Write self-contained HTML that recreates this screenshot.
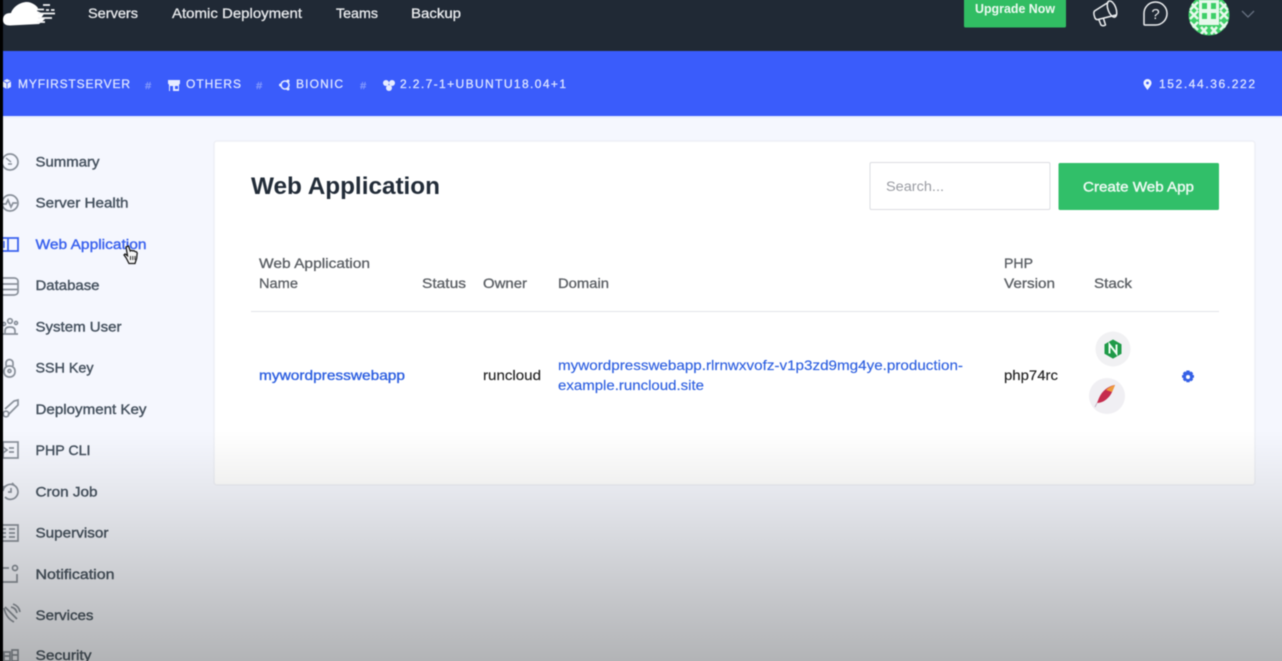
<!DOCTYPE html>
<html lang="en">
<head>
<meta charset="utf-8">
<title>Web Application</title>
<style>
html,body{margin:0;padding:0;width:1282px;height:661px;overflow:hidden;background:#f5f7fe}
#wrap{position:relative;width:1282px;height:661px;overflow:hidden}
svg{display:block;position:absolute;left:-10px;top:-10px;filter:blur(.5px)}
text{font-family:"Liberation Sans",sans-serif;font-size:14px}
.nav text{fill:#e8eaed;stroke:#e8eaed;stroke-width:.3px}
.bar text{fill:#dfe6ff;stroke:#dfe6ff;stroke-width:.25px;font-size:12px}
.side text{fill:#46525f;stroke:#46525f;stroke-width:.4px}
.th text{fill:#5a5e63;stroke:#5a5e63;stroke-width:.3px}
.ic{fill:none;stroke:#8a919b;stroke-width:1.700}
</style>
</head>
<body>
<div id="wrap">
<svg width="1302" height="681" viewBox="-10 -10 1302 681" xmlns="http://www.w3.org/2000/svg">
<defs>
<linearGradient id="fade" x1="0" y1="0" x2="0" y2="1">
<stop offset="0" stop-color="#1c1c14" stop-opacity="0"/>
<stop offset=".06" stop-color="#1c1c14" stop-opacity=".015"/>
<stop offset=".25" stop-color="#1c1c14" stop-opacity=".07"/>
<stop offset="1" stop-color="#1c1c14" stop-opacity=".32"/>
</linearGradient>
</defs>
<rect x="-10" y="-10" width="1302" height="681" fill="#f5f7fe"/>

<!-- top bar -->
<rect x="3" y="-10" width="1289" height="61" fill="#202935"/>
<rect x="3" y="51" width="1289" height="65" fill="#3a5cfb"/>
<rect x="3" y="116" width="1289" height="2" fill="#e9effe"/>

<!-- logo -->
<path d="M3 20C3 15 6 13 11 13C13 7 20 2 27 2C31 2 36 5 38 8L37 11L44 14L41 18L45 19L39 24L10 25.500C6 25.500 3 24 3 20Z" fill="#fff"/>
<path d="M43 5h7M37 9.500h7M46 10h3M51 10h3.500M38 13.500h17M38 18h14M37 22h8" stroke="#f2f3f5" stroke-width="1.700" fill="none"/>

<g class="nav">
<text x="88" y="18" textLength="50" lengthAdjust="spacingAndGlyphs">Servers</text>
<text x="172" y="18" textLength="130" lengthAdjust="spacingAndGlyphs">Atomic Deployment</text>
<text x="336" y="18" textLength="42" lengthAdjust="spacingAndGlyphs">Teams</text>
<text x="411" y="18" textLength="50" lengthAdjust="spacingAndGlyphs">Backup</text>
</g>

<!-- upgrade -->
<path d="M964 -10H1066V26a1.500 1.500 0 0 1-1.500 1.500H965.500A1.500 1.500 0 0 1 964 26Z" fill="#31bd63"/>
<text x="975" y="13" textLength="80" lengthAdjust="spacingAndGlyphs" style="font-size:12.500px;font-weight:bold" fill="#eefaf2">Upgrade Now</text>

<!-- megaphone -->
<g fill="none" stroke="#eceef0" stroke-width="1.500" stroke-linejoin="round" stroke-linecap="round">
<ellipse cx="1112" cy="9" rx="4" ry="8.500" transform="rotate(-20 1112 9)"/>
<path d="M1108 2.500L1094.500 11Q1093 13 1095 18Q1096 20 1098 19.500L1116 15"/>
<path d="M1099 20L1101 25Q1103 26.500 1105.500 25L1103.500 18.500"/>
</g>
<!-- question -->
<path d="M1144 24V13.500A11.500 11.500 0 1 1 1155.500 25H1145Q1144 25 1144 24Z" fill="none" stroke="#eceef0" stroke-width="1.500"/>
<text x="1155.500" y="19" text-anchor="middle" style="font-size:15px" fill="#eceef0">?</text>

<!-- avatar -->
<clipPath id="av"><circle cx="1209" cy="15" r="20.500"/></clipPath>
<g clip-path="url(#av)">
<rect x="1188" y="-6" width="42" height="42" fill="#3ecf68"/>
<path d="M1190 2l8 8M1198 2l-8 8M1190 11l8 8M1198 11l-8 8M1220 2l8 8M1228 2l-8 8M1220 11l8 8M1228 11l-8 8M1190 22l8 8M1198 22l-8 8M1220 22l8 8M1228 22l-8 8M1201 27l6 7M1207 27l-6 7M1211 27l6 7M1217 27l-6 7" stroke="#e7f9ec" stroke-width="2.500"/>
<rect x="1199" y="0" width="20" height="25" fill="#e7f9ec"/>
<path d="M1202 3h5v6h-5zM1211 3h5v6h-5zM1202 13h5v6h-5zM1211 13h5v6h-5z" fill="#3ecf68"/>
</g>
<path d="M1242 11l6 6 6-6" fill="none" stroke="#667080" stroke-width="1.300"/>

<!-- breadcrumbs -->
<g class="bar">
<path d="M3 81l4-2 4 2v6l-4 2-4-2z" fill="#e6ebff"/><path d="M3 81l4 2 4-2M7 83v6" stroke="#3a5cfb" stroke-width=".8" fill="none"/>
<text x="18" y="88" textLength="112" lengthAdjust="spacing">MYFIRSTSERVER</text>
<text x="145" y="89" textLength="6" lengthAdjust="spacingAndGlyphs" style="font-size:10px;font-style:italic;opacity:.45">#</text>
<path d="M168 80h12v3a1.500 1.500 0 0 1-1 1.500V91h-10v-6.500a1.500 1.500 0 0 1-1-1.500z" fill="#e6ebff"/><path d="M170 86h3v5h-3zM175 86h3v3h-3z" fill="#3a5cfb"/>
<text x="186" y="88" textLength="55" lengthAdjust="spacing">OTHERS</text>
<text x="256" y="89" textLength="6" lengthAdjust="spacingAndGlyphs" style="font-size:10px;font-style:italic;opacity:.45">#</text>
<circle cx="285" cy="85" r="4" fill="none" stroke="#e6ebff" stroke-width="1.500"/><circle cx="280.500" cy="85" r="1.500" fill="#e6ebff"/><circle cx="288" cy="81" r="1.500" fill="#e6ebff"/><circle cx="288" cy="89" r="1.500" fill="#e6ebff"/>
<text x="296" y="88" textLength="47" lengthAdjust="spacing">BIONIC</text>
<text x="360" y="89" textLength="6" lengthAdjust="spacingAndGlyphs" style="font-size:10px;font-style:italic;opacity:.45">#</text>
<circle cx="386" cy="83" r="3" fill="#e6ebff"/><circle cx="392" cy="83" r="3" fill="#e6ebff"/><circle cx="389" cy="88" r="3" fill="#e6ebff"/>
<text x="400" y="88" textLength="166" lengthAdjust="spacing">2.2.7-1+UBUNTU18.04+1</text>
<path d="M1147.500 90C1145 86.500 1143.500 85 1143.500 83a4 4 0 0 1 8 0C1151.500 85 1150 86.500 1147.500 90Z" fill="#f0f3ff"/><circle cx="1147.500" cy="83" r="1.400" fill="#3a5cfb"/>
<text x="1159" y="88" textLength="96" lengthAdjust="spacing">152.44.36.222</text>
</g>

<!-- sidebar icons -->
<g class="ic">
<circle cx="10" cy="162" r="8"/><path d="M6 158l5 4M8 164h4" stroke-width="1.400"/>
<circle cx="10" cy="203" r="8"/><path d="M3 204h3l2-4 3 7 2-4h4"/>
<path d="M3 238H18V251H3M8 238V251" stroke="#3a62ee" stroke-width="1.800"/><path d="M4 241V248" stroke="#3a62ee" stroke-width="1.300"/>
<path d="M3 278h11a4 3 0 0 1 4 3v11a4 3 0 0 1-4 3H3M3 284h15M3 289.500h15"/>
<circle cx="10" cy="321" r="2.300"/><circle cx="4" cy="324" r="1.500"/><circle cx="16" cy="323" r="1.500"/><path d="M5 334v-3q0-4 5-4t5 4v3zM3 334h15"/>
<rect x="4" y="366" width="11" height="11" rx="5"/><path d="M6 366v-3a3.500 3.500 0 0 1 7 0v3"/><circle cx="9.500" cy="371" r="1.500"/>
<path d="M5 409L14 401L18 400L18 405L8 415"/><circle cx="6" cy="414" r="2.800"/>
<rect x="3" y="442" width="15" height="16"/><path d="M3 447l4 3-4 3M9 448h5M9 452h5"/>
<path d="M3 491a7.500 7.500 0 1 1 2 6M6 486l-3 1M11 488v4H8M12 483l2 2" />
<path d="M3 525H18V541H3M3 529h3M3 533h3M3 537h3M9 529h6M9 533h6M9 537h6"/>
<path d="M3 568H9M3 582H17V574"/><circle cx="15" cy="568" r="2.500"/>
<path d="M4 608Q6 618 14 622M5 607l12 12M11 607q5 1 6 6M13 604q6 2 7 8"/>
<path d="M4 652h6v9H4zM12 650h6v11h-6zM12 655h6M4 656h6"/>
</g>

<!-- sidebar labels -->
<g class="side">
<text x="35.500" y="166.500" textLength="64" lengthAdjust="spacingAndGlyphs">Summary</text>
<text x="35.500" y="207.500" textLength="93" lengthAdjust="spacingAndGlyphs">Server Health</text>
<text x="35.500" y="249" textLength="111" lengthAdjust="spacingAndGlyphs" style="fill:#3a62ee;stroke:#3a62ee">Web Application</text>
<text x="35.500" y="290" textLength="64" lengthAdjust="spacingAndGlyphs">Database</text>
<text x="35.500" y="331.500" textLength="86" lengthAdjust="spacingAndGlyphs">System User</text>
<text x="35.500" y="372.500" textLength="58" lengthAdjust="spacingAndGlyphs">SSH Key</text>
<text x="35.500" y="414" textLength="111" lengthAdjust="spacingAndGlyphs">Deployment Key</text>
<text x="35.500" y="455" textLength="55" lengthAdjust="spacingAndGlyphs">PHP CLI</text>
<text x="35.500" y="496.500" textLength="62" lengthAdjust="spacingAndGlyphs">Cron Job</text>
<text x="35.500" y="537.500" textLength="73" lengthAdjust="spacingAndGlyphs">Supervisor</text>
<text x="35.500" y="579" textLength="79" lengthAdjust="spacingAndGlyphs">Notification</text>
<text x="35.500" y="620" textLength="58" lengthAdjust="spacingAndGlyphs">Services</text>
<text x="35.500" y="660" textLength="56" lengthAdjust="spacingAndGlyphs">Security</text>
</g>

<!-- cursor -->
<path d="M126 247l2.500-1 1.800 5 1.200-.7 1.300.6 1.200-.2 1.200.9 1.300.2.700 1.200-.6 5.500-1.600 5h-6l-2.800-5.500-2.200-3 1.100-1 2.400 1.700z" fill="#f4f4f4" stroke="#1a1a1a" stroke-width="1.300"/>
<path d="M130.500 256v4M132.800 256v4M135 256v4" stroke="#1a1a1a" stroke-width=".9"/>

<!-- card -->
<rect x="214" y="141" width="1041" height="344" rx="3" fill="#fff" stroke="#eef0f6" stroke-width="1.500"/>
<text x="251" y="194" textLength="189" lengthAdjust="spacingAndGlyphs" style="font-size:24px;font-weight:bold" fill="#222c38">Web Application</text>

<rect x="870" y="162.500" width="180" height="47" rx="1.500" fill="#fff" stroke="#dcdde2" stroke-width="1"/>
<text x="886" y="191" textLength="58" lengthAdjust="spacingAndGlyphs" fill="#9a9ca3">Search...</text>
<rect x="1058.500" y="163" width="160.500" height="47" rx="1.500" fill="#31bf69"/>
<text x="1083" y="191.500" textLength="111" lengthAdjust="spacingAndGlyphs" fill="#eefaf3" stroke="#eefaf3" stroke-width=".4">Create Web App</text>

<g class="th">
<text x="259" y="268" textLength="111" lengthAdjust="spacingAndGlyphs">Web Application</text>
<text x="259" y="288" textLength="39" lengthAdjust="spacingAndGlyphs">Name</text>
<text x="422" y="288" textLength="44" lengthAdjust="spacingAndGlyphs">Status</text>
<text x="483" y="288" textLength="44" lengthAdjust="spacingAndGlyphs">Owner</text>
<text x="558" y="288" textLength="51" lengthAdjust="spacingAndGlyphs">Domain</text>
<text x="1004" y="268" textLength="29" lengthAdjust="spacingAndGlyphs">PHP</text>
<text x="1004" y="288" textLength="51" lengthAdjust="spacingAndGlyphs">Version</text>
<text x="1094" y="288" textLength="38" lengthAdjust="spacingAndGlyphs">Stack</text>
</g>
<rect x="251" y="311" width="968" height="1" fill="#e2e4e8"/>

<text x="259" y="380" textLength="146" lengthAdjust="spacingAndGlyphs" fill="#2d5fe0" stroke="#2d5fe0" stroke-width=".35">mywordpresswebapp</text>
<text x="483" y="380" textLength="58" lengthAdjust="spacingAndGlyphs" fill="#222" stroke="#222" stroke-width=".15">runcloud</text>
<text x="558" y="370" textLength="405" lengthAdjust="spacingAndGlyphs" fill="#2d5fe0" stroke="#2d5fe0" stroke-width=".15">mywordpresswebapp.rlrnwxvofz-v1p3zd9mg4ye.production-</text>
<text x="558" y="390" textLength="146" lengthAdjust="spacingAndGlyphs" fill="#2d5fe0" stroke="#2d5fe0" stroke-width=".15">example.runcloud.site</text>
<text x="1004" y="380" textLength="54" lengthAdjust="spacingAndGlyphs" fill="#222" stroke="#222" stroke-width=".15">php74rc</text>

<!-- nginx -->
<circle cx="1113" cy="349" r="17.500" fill="#f1f1f3"/>
<path d="M1113 339.500l8.500 4.800v9.500l-8.500 4.800-8.500-4.800v-9.500z" fill="#1f9a48"/>
<path d="M1109.500 353.500v-9l7 9v-9" fill="none" stroke="#f2fff6" stroke-width="1.900"/>
<!-- apache -->
<circle cx="1107" cy="396" r="18" fill="#f0eff3"/>
<path d="M1115 385C1108 386 1102 391 1099 398L1097 403C1104 403 1110 397 1112 392Z" fill="#c52c4e"/>
<path d="M1115 385C1111 386 1108 388 1106 390L1112 392Z" fill="#ef9a3a"/>
<path d="M1097 403L1095 407" stroke="#c4b5c6" stroke-width="1"/>

<!-- gear -->
<path d="M1186.400 370.500h3.200l.3 1.500 1.500-.5 1.700 1.800-.6 1.400 1.500.5v2.400l-1.500.5.600 1.400-1.700 1.800-1.500-.5-.3 1.500h-3.200l-.3-1.500-1.500.5-1.700-1.800.6-1.400-1.500-.5v-2.400l1.500-.5-.6-1.400 1.700-1.800 1.500.5z" fill="#3560e6"/>
<circle cx="1188" cy="377" r="2" fill="#fff"/>

<!-- fade overlay -->
<rect x="3" y="430" width="1289" height="241" fill="url(#fade)"/>
<!-- left black strip -->
<rect x="-10" y="-10" width="13" height="681" fill="#000"/>
</svg>
</div>
</body>
</html>
